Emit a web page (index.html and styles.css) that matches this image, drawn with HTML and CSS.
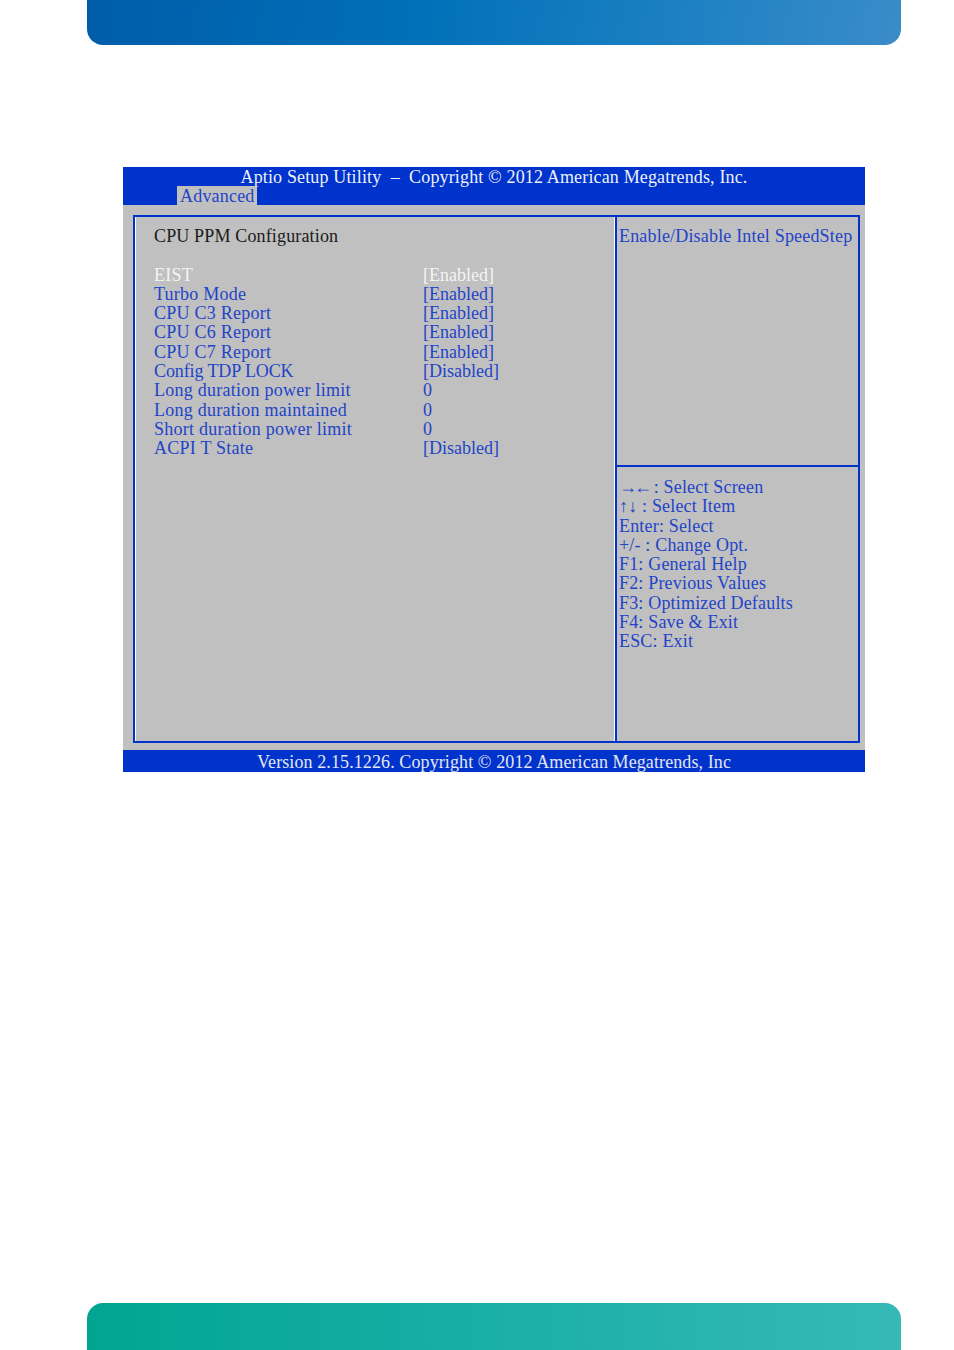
FILE: index.html
```html
<!DOCTYPE html>
<html>
<head>
<meta charset="utf-8">
<link rel="stylesheet" href="styles.css">
</head>
<body>
<div class="page">
  <div class="top-bar"></div>
  <div class="bios">
    <div class="bios-header">
      <div class="bios-title">Aptio Setup Utility &nbsp;–&nbsp; Copyright © 2012 American Megatrends, Inc.</div>
      <div class="bios-tabs"><span class="tab">Advanced</span></div>
    </div>
    <div class="bios-body">
      <div class="frame">
        <div class="left-panel">
          <div class="panel-title">CPU PPM Configuration</div>
          <div class="row selected"><span>EIST</span><span class="val">[Enabled]</span></div>
          <div class="row"><span>Turbo Mode</span><span class="val">[Enabled]</span></div>
          <div class="row"><span>CPU C3 Report</span><span class="val">[Enabled]</span></div>
          <div class="row"><span>CPU C6 Report</span><span class="val">[Enabled]</span></div>
          <div class="row"><span>CPU C7 Report</span><span class="val">[Enabled]</span></div>
          <div class="row"><span class="caps">Config TDP LOCK</span><span class="val">[Disabled]</span></div>
          <div class="row"><span>Long duration power limit</span><span class="val">0</span></div>
          <div class="row"><span>Long duration maintained</span><span class="val">0</span></div>
          <div class="row"><span>Short duration power limit</span><span class="val">0</span></div>
          <div class="row"><span>ACPI T State</span><span class="val">[Disabled]</span></div>
        </div>
        <div class="right-panel">
          <div class="help">Enable/Disable Intel SpeedStep</div>
          <div class="keys">
            <div><span class="arrows">→←</span> : Select Screen</div>
            <div>↑↓ : Select Item</div>
            <div>Enter: Select</div>
            <div>+/- : Change Opt.</div>
            <div>F1: General Help</div>
            <div>F2: Previous Values</div>
            <div>F3: Optimized Defaults</div>
            <div>F4: Save &amp; Exit</div>
            <div>ESC: Exit</div>
          </div>
        </div>
      </div>
    </div>
    <div class="bios-footer"><span class="footer-text">Version 2.15.1226. Copyright © 2012 American Megatrends, Inc</span></div>
  </div>
  <div class="bottom-bar"></div>
</div>
</body>
</html>
```

FILE: styles.css
```css
html, body {
  margin: 0;
  padding: 0;
  background: #ffffff;
}

.page {
  width: 954px;
  height: 1350px;
  display: flex;
  flex-direction: column;
  overflow: hidden;
  font-family: "Liberation Serif", "Times New Roman", serif;
  font-size: 18px;
}

.top-bar {
  margin-left: 87px;
  width: 814px;
  height: 45px;
  border-radius: 0 0 16px 16px;
  background: linear-gradient(100deg, #005ca9 0%, #0070b8 40%, #1a7fc2 70%, #3a8cc8 100%);
}

.bottom-bar {
  margin-top: auto;
  margin-left: 87px;
  width: 814px;
  height: 47px;
  border-radius: 16px 16px 0 0;
  background: linear-gradient(90deg, #00a591 0%, #1aafa8 50%, #36b9b6 100%);
}

.bios {
  margin-top: 122px;
  margin-left: 123px;
  width: 742px;
  display: flex;
  flex-direction: column;
}

.bios-header {
  background: #0033cc;
  height: 38px;
  display: flex;
  flex-direction: column;
}

.bios-title {
  height: 19px;
  line-height: 21px;
  text-align: center;
  color: #eef0fa;
  letter-spacing: 0.15px;
}

.bios-tabs {
  height: 19px;
  display: flex;
}

.tab {
  margin-left: 54px;
  width: 80px;
  padding-left: 3px;
  box-sizing: border-box;
  background: #c0c0c0;
  color: #1f44c8;
  line-height: 20px;
  letter-spacing: 0.2px;
}

.bios-body {
  background: #c0c0c0;
  height: 545px;
  padding: 10px 5px 7px 10px;
  box-sizing: border-box;
}

.frame {
  height: 100%;
  box-sizing: border-box;
  border: 2px solid #0033cc;
  display: grid;
  grid-template-columns: 480px 1fr;
}

.left-panel {
  border-left: 1px solid #ffffff;
  border-right: 1px solid #ffffff;
  padding: 10px 0 0 18px;
  color: #1f44c8;
  line-height: 19.3px;
  letter-spacing: 0.25px;
}

.panel-title {
  color: #1a1a1a;
  margin-bottom: 19.3px;
  letter-spacing: 0.15px;
}

.row {
  display: grid;
  grid-template-columns: 269px 1fr;
}

.row .val {
  letter-spacing: 0;
}

.row .caps {
  letter-spacing: -0.1px;
}

.row.selected {
  color: #f4f4f4;
}

.right-panel {
  border-left: 2px solid #0033cc;
  display: grid;
  grid-template-rows: 250px 1fr;
  color: #1f44c8;
  line-height: 19.25px;
  letter-spacing: 0.18px;
}

.help {
  padding: 10px 0 0 2px;
  border-bottom: 2px solid #0033cc;
}

.keys {
  padding: 11px 0 0 2px;
}

.arrows {
  letter-spacing: -3px;
}

.bios-footer {
  background: #0033cc;
  height: 22px;
  text-align: center;
  color: #e4e6f0;
  line-height: 25px;
}

.footer-text {
  letter-spacing: 0.1px;
}
```
